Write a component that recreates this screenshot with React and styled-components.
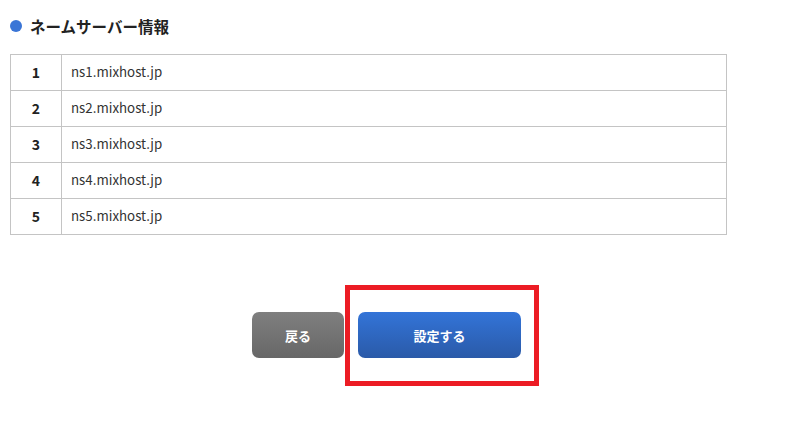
import React from "react";
import styled, { createGlobalStyle } from "styled-components";

const Global = createGlobalStyle`
  html, body { margin: 0; padding: 0; background: #fff; }
  body { font-family: "Noto Sans CJK JP", "Noto Sans", sans-serif; color: #333; }
`;

const Page = styled.div`
  width: 792px;
  height: 434px;
  padding: 15px 10px 0 10px;
  box-sizing: border-box;
`;

const Heading = styled.h2`
  margin: 0;
  display: flex;
  align-items: center;
  gap: 8px;
  font-size: 15.5px;
  font-weight: 700;
  color: #222;
  height: 22px;
  line-height: 22px;
  &::before {
    content: "";
    width: 12px;
    height: 12px;
    border-radius: 50%;
    background: #3a75d6;
  }
`;

const Table = styled.table`
  margin-top: 17px;
  width: 717px;
  border-collapse: collapse;
  font-size: 13px;
`;

const Row = styled.tr`
  height: 36px;
`;

const NumCell = styled.td`
  width: 50px;
  border: 1px solid #c4c4c4;
  text-align: center;
  font-weight: 700;
  font-size: 14px;
  color: #222;
  padding: 0 0 2px;
`;

const ValueCell = styled.td`
  border: 1px solid #c4c4c4;
  padding: 0 0 2px 9px;
  color: #333;
  font-size: 13.3px;
`;

const Actions = styled.div`
  display: flex;
  align-items: center;
  padding-left: 242px;
  margin-top: 77px;
`;

const Button = styled.button`
  position: relative;
  border: none;
  height: 46px;
  border-radius: 7px;
  color: #fff;
  font-family: "Noto Sans CJK JP", "Noto Sans", sans-serif;
  font-size: 13px;
  font-weight: 700;
  cursor: pointer;
  width: ${(p) => (p.$primary ? "163px" : "92px")};
  margin-left: ${(p) => (p.$primary ? "14px" : "0")};
  background: ${(p) =>
    p.$primary
      ? "linear-gradient(#3374d8, #2a5aa8)"
      : "linear-gradient(#7f7f7f, #676767)"};
`;

const Highlight = styled.span`
  position: absolute;
  top: -27px;
  left: -13px;
  right: -18px;
  bottom: -28px;
  border: 5px solid #ec1c24;
  pointer-events: none;
`;

const servers = [
  "ns1.mixhost.jp",
  "ns2.mixhost.jp",
  "ns3.mixhost.jp",
  "ns4.mixhost.jp",
  "ns5.mixhost.jp",
];

export default function App() {
  return (
    <>
      <Global />
      <Page>
        <Heading>ネームサーバー情報</Heading>
        <Table>
          <tbody>
            {servers.map((s, i) => (
              <Row key={s}>
                <NumCell>{i + 1}</NumCell>
                <ValueCell>{s}</ValueCell>
              </Row>
            ))}
          </tbody>
        </Table>
        <Actions>
          <Button>戻る</Button>
          <Button $primary>
            設定する
            <Highlight />
          </Button>
        </Actions>
      </Page>
    </>
  );
}
